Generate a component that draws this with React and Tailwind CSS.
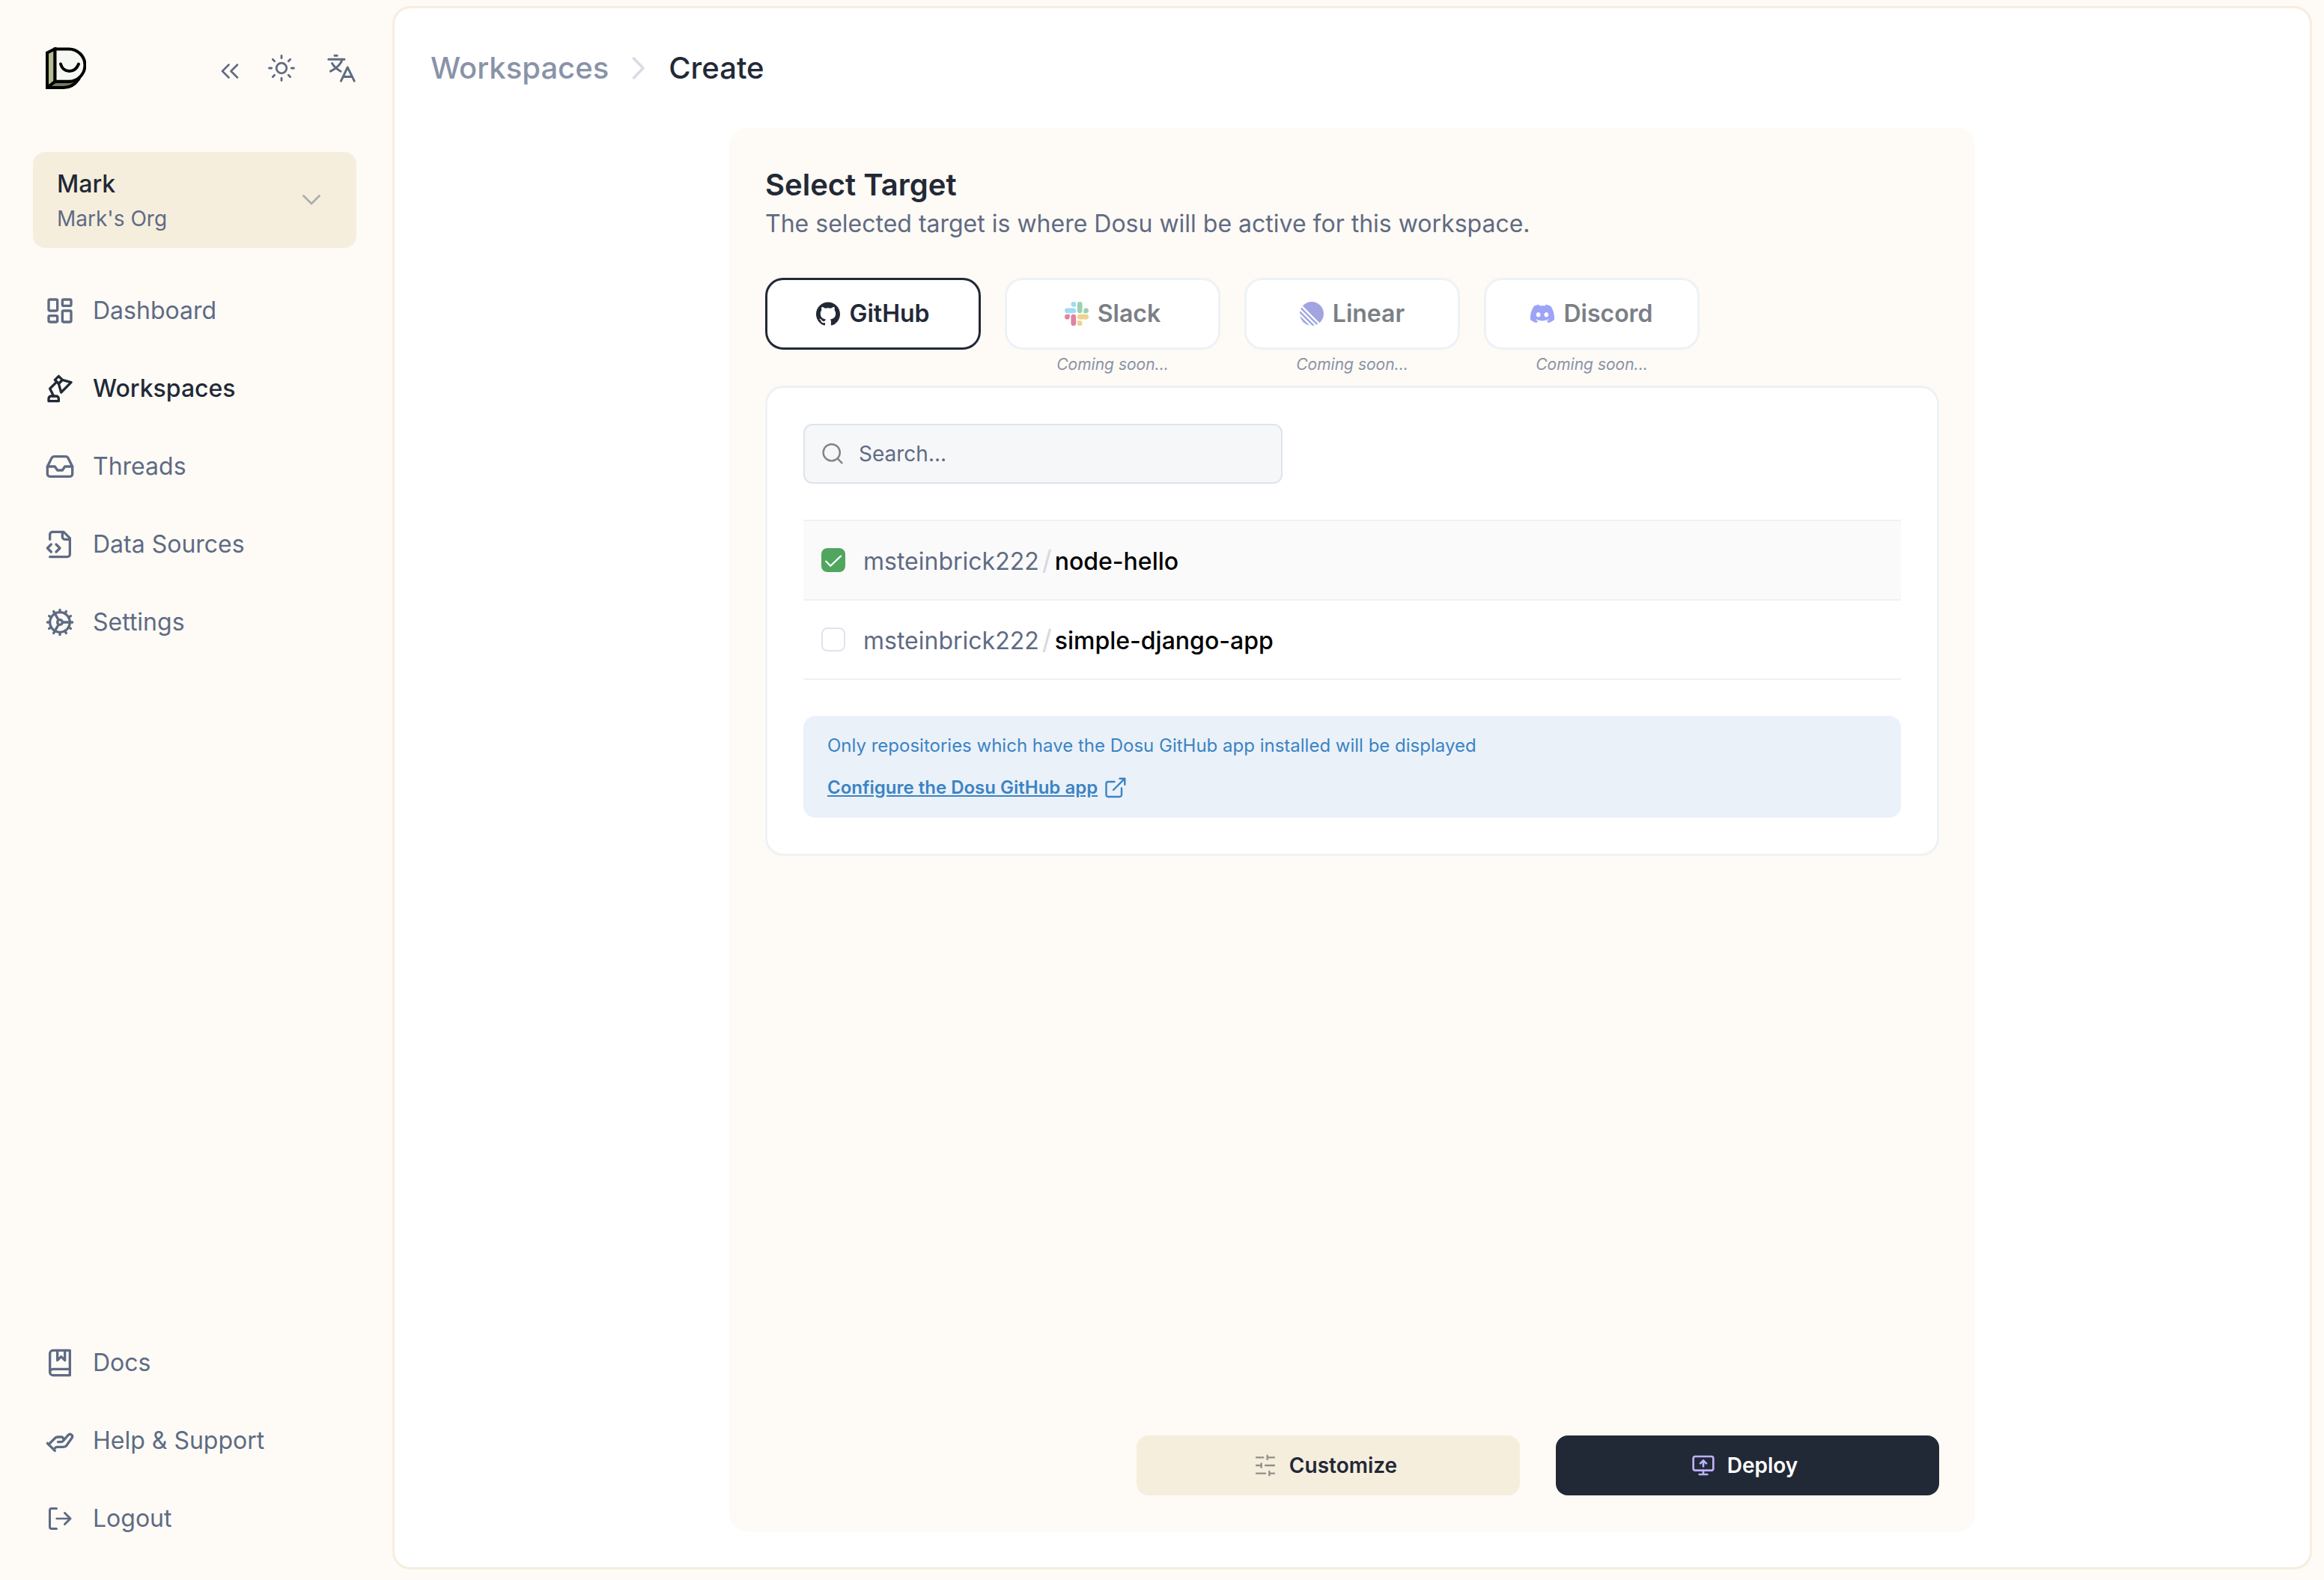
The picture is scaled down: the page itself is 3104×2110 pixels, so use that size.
import { useState } from "react";
import { SiDiscord, SiGithub, SiLinear } from "react-icons/si";

function Icon({ className, size = 24, stroke = 2, children }) {
  return (
    <svg
      viewBox={`0 0 ${size} ${size}`}
      className={className}
      fill="none"
      stroke="currentColor"
      strokeWidth={stroke}
      strokeLinecap="round"
      strokeLinejoin="round"
      aria-hidden="true"
    >
      {children}
    </svg>
  );
}

function Logo() {
  return (
    <svg viewBox="0 0 54 56" className="h-14 w-[54px]" fill="none" stroke="#000" strokeWidth="4" role="img" aria-label="Dosu">
      <path d="M2 7.5 12.5 2.2V46L2 54Z" fill="#b5bb91" />
      <path d="M2 54 12.5 46H31l12-2C38 51 32 54 24 54Z" fill="#717b5d" />
      <path d="M12.5 2.4H31a21.4 21.6 0 0 1 0 43.3H12.5Z" fill="#f5f7f3" />
      <path d="M20 22.500C22 29 26 32 31.700 32S41.500 29 44 22.500" strokeLinecap="round" />
    </svg>
  );
}

const DashboardIcon = (p) => (
  <Icon {...p}>
    <rect x="3" y="3" width="7" height="9" rx="1" />
    <rect x="14" y="3" width="7" height="5" rx="1" />
    <rect x="14" y="12" width="7" height="9" rx="1" />
    <rect x="3" y="16" width="7" height="5" rx="1" />
  </Icon>
);

const LampIcon = (p) => (
  <Icon {...p}>
    <path d="m14 5-3 3 2 7 8-8-7-2Z" />
    <path d="m14 5-3 3-3-3 3-3 3 3Z" />
    <path d="M9.500 6.500 4 12l3 6" />
    <path d="M3 22v-2c0-1.100.900-2 2-2h4a2 2 0 0 1 2 2v2H3Z" />
  </Icon>
);

const InboxIcon = (p) => (
  <Icon {...p}>
    <path d="M22 12h-6l-2 3h-4l-2-3H2" />
    <path d="M5.450 5.110 2 12v6a2 2 0 0 0 2 2h16a2 2 0 0 0 2-2v-6l-3.450-6.890A2 2 0 0 0 16.760 4H7.240a2 2 0 0 0-1.790 1.110z" />
  </Icon>
);

const FileCodeIcon = (p) => (
  <Icon {...p}>
    <path d="M4 22h14a2 2 0 0 0 2-2V7l-5-5H6a2 2 0 0 0-2 2v4" />
    <path d="M14 2v4a2 2 0 0 0 2 2h4" />
    <path d="m5 12-3 3 3 3" />
    <path d="m9 18 3-3-3-3" />
  </Icon>
);

const CogIcon = (p) => (
  <Icon {...p}>
    <path d="M12 20a8 8 0 1 0 0-16 8 8 0 0 0 0 16Z" />
    <path d="M12 14a2 2 0 1 0 0-4 2 2 0 0 0 0 4Z" />
    <path d="M12 2v2M12 22v-2M17 20.660l-1-1.730M11 10.270 7 3.340M20.660 17l-1.730-1M3.340 7l1.730 1M14 12h8M2 12h2M20.660 7l-1.730 1M3.340 17l1.730-1M17 3.340l-1 1.730M11 13.730l-4 6.930" />
  </Icon>
);

const BookIcon = (p) => (
  <Icon {...p}>
    <path d="M4 19.500v-15A2.500 2.500 0 0 1 6.500 2H20v20H6.500a2.500 2.500 0 0 1 0-5H20" />
    <path d="M10 2v8l3-3 3 3V2" />
  </Icon>
);

const HandIcon = (p) => (
  <Icon {...p}>
    <path d="m3 15 5.120-5.120A3 3 0 0 1 10.240 9H13a2 2 0 1 1 0 4h-2.500m4-.680 4.170-4.890a1.880 1.880 0 0 1 2.920 2.360l-4.200 5.940A3 3 0 0 1 14.960 17H9.830a2 2 0 0 0-1.420.590L7 19" />
    <path d="m2 14 6 6" />
  </Icon>
);

const LogoutIcon = (p) => (
  <Icon {...p} size={40} stroke={3}>
    <path d="M15.500 6.500H9A2.500 2.500 0 0 0 6.500 9v22A2.500 2.500 0 0 0 9 33.500h6.500" />
    <path d="M15.500 20H33" strokeWidth="2.400" />
    <path d="m26.500 12.500 7.500 7.500-7.500 7.500" />
  </Icon>
);

const SlackIcon = ({ className }) => (
  <svg viewBox="0 0 24 24" className={className} aria-hidden="true">
    <path fill="#e1839f" d="M5.042 15.165a2.528 2.528 0 0 1-2.520 2.523A2.528 2.528 0 0 1 0 15.165a2.527 2.527 0 0 1 2.522-2.520h2.520v2.520zM6.313 15.165a2.527 2.527 0 0 1 2.521-2.520 2.527 2.527 0 0 1 2.521 2.520v6.313A2.528 2.528 0 0 1 8.834 24a2.528 2.528 0 0 1-2.521-2.522v-6.313z" />
    <path fill="#a0daf4" d="M8.834 5.042a2.528 2.528 0 0 1-2.521-2.520A2.528 2.528 0 0 1 8.834 0a2.528 2.528 0 0 1 2.521 2.522v2.520H8.834zM8.834 6.313a2.528 2.528 0 0 1 2.521 2.521 2.528 2.528 0 0 1-2.521 2.521H2.522A2.528 2.528 0 0 1 0 8.834a2.528 2.528 0 0 1 2.522-2.521h6.312z" />
    <path fill="#99d2b1" d="M18.956 8.834a2.528 2.528 0 0 1 2.522-2.521A2.528 2.528 0 0 1 24 8.834a2.528 2.528 0 0 1-2.522 2.521h-2.522V8.834zM17.688 8.834a2.528 2.528 0 0 1-2.523 2.521 2.527 2.527 0 0 1-2.520-2.521V2.522A2.527 2.527 0 0 1 15.165 0a2.528 2.528 0 0 1 2.523 2.522v6.312z" />
    <path fill="#edd291" d="M15.165 18.956a2.528 2.528 0 0 1 2.523 2.522A2.528 2.528 0 0 1 15.165 24a2.527 2.527 0 0 1-2.520-2.522v-2.522h2.520zM15.165 17.688a2.527 2.527 0 0 1-2.520-2.523 2.526 2.526 0 0 1 2.520-2.520h6.313A2.527 2.527 0 0 1 24 15.165a2.528 2.528 0 0 1-2.522 2.523h-6.313z" />
  </svg>
);

const mainNav = [
  { label: "Dashboard", icon: DashboardIcon },
  { label: "Workspaces", icon: LampIcon, active: true },
  { label: "Threads", icon: InboxIcon },
  { label: "Data Sources", icon: FileCodeIcon },
  { label: "Settings", icon: CogIcon },
];

const footerNav = [
  { label: "Docs", icon: BookIcon },
  { label: "Help & Support", icon: HandIcon },
  { label: "Logout", icon: LogoutIcon },
];

function NavList({ items, label }) {
  return (
    <nav aria-label={label} className="flex flex-col gap-8 px-4">
      {items.map(({ label: text, icon: Glyph, active }) => (
        <a
          key={text}
          href="#"
          aria-current={active ? "page" : undefined}
          className={
            active
              ? "flex h-[72px] items-center gap-6 text-[32px] font-medium text-[#222936]"
              : "flex h-[72px] items-center gap-6 text-[32px] text-[#5f6b84]"
          }
        >
          <Glyph className="size-10 shrink-0" />
          {text}
        </a>
      ))}
    </nav>
  );
}

function Sidebar() {
  return (
    <aside className="flex w-[524px] shrink-0 flex-col pt-[59px] pr-12 pb-[46px] pl-11">
      <div className="mb-20 flex h-16 items-center justify-between pl-[17px]">
        <a href="#" aria-label="Home">
          <Logo />
        </a>
        <div className="flex items-center gap-[37px] text-[#5f6b84]">
          <button type="button" aria-label="Collapse sidebar" className="pt-2">
            <svg viewBox="0 0 24 20" className="h-5 w-6" fill="none" stroke="currentColor" strokeWidth="2.600" strokeLinecap="round" strokeLinejoin="round">
              <path d="M10.500 1.500 2 10l8.500 8.500M22 1.500 13.500 10l8.500 8.500" />
            </svg>
          </button>
          <div className="flex items-center gap-10">
            <button type="button" aria-label="Toggle theme">
              <Icon className="size-10" size={40} stroke={2.8}>
                <circle cx="20" cy="20" r="6.800" />
                <path d="M20 3.500v3.200M20 33.300v3.200M3.500 20h3.200M33.300 20h3.200M8.300 8.300l2.400 2.400M29.300 29.300l2.400 2.400M8.300 31.700l2.400-2.400M29.300 10.700l2.400-2.400" />
              </Icon>
            </button>
            <button type="button" aria-label="Change language">
              <Icon className="size-10" size={40} stroke={3}>
                <path d="M11 3.200h3.200M2.800 8.200H24M21.500 8.200C19 14.500 13 20.500 5.500 24.200M7.500 13.500c2.500 4.200 6.500 8 11.500 10.700" />
                <path d="m19.500 37.200 8.700-18.400 9 18.400M22.500 31.500h11.500" />
              </Icon>
            </button>
          </div>
        </div>
      </div>

      <button type="button" className="mb-12 flex h-32 items-center justify-between rounded-2xl bg-[#f6eedd] pr-12 pl-8 text-left">
        <span className="flex flex-col">
          <span className="text-[32px] leading-[50px] font-medium text-[#222936]">Mark</span>
          <span className="text-[28px] leading-[42px] text-[#5f6b84]">Mark's Org</span>
        </span>
        <svg viewBox="0 0 24 14" className="h-[14px] w-6 text-[#a9adb2]" fill="none" stroke="currentColor" strokeWidth="2.800" strokeLinecap="round" strokeLinejoin="round" aria-hidden="true">
          <path d="M1.500 1.500 12 12 22.500 1.500" />
        </svg>
      </button>

      <NavList items={mainNav} label="Main" />
      <div className="flex-1" />
      <NavList items={footerNav} label="Support" />
    </aside>
  );
}

const targets = [
  { name: "GitHub", icon: <SiGithub className="size-8" />, ready: true },
  { name: "Slack", icon: <SlackIcon className="size-8" /> },
  { name: "Linear", icon: <SiLinear className="size-8 text-[#a0a5e1]" /> },
  { name: "Discord", icon: <SiDiscord className="size-8 text-[#9da3f7]" /> },
];

function TargetTabs() {
  return (
    <div className="mt-12 flex gap-8">
      {targets.map(({ name, icon, ready }) => (
        <div key={name} className="flex w-72 flex-col items-center">
          <button
            type="button"
            disabled={!ready}
            className={
              ready
                ? "flex h-24 w-full items-center justify-center gap-3 rounded-3xl border-3 border-[#222936] bg-white text-[32px] font-semibold text-[#222936]"
                : "flex h-24 w-full items-center justify-center gap-3 rounded-3xl border-3 border-[#eef2f6] bg-white text-[32px] font-semibold text-[#7b7f86]"
            }
          >
            {icon}
            {name}
          </button>
          <div className="h-12 pt-1 text-[21px] leading-8 text-[#8993a8] italic">{ready ? null : "Coming soon..."}</div>
        </div>
      ))}
    </div>
  );
}

const repos = [
  { owner: "msteinbrick222", name: "node-hello" },
  { owner: "msteinbrick222", name: "simple-django-app" },
];

function RepoList() {
  const [selected, setSelected] = useState("node-hello");
  return (
    <ul className="mt-12 border-t-2 border-[#eef2f5]">
      {repos.map(({ owner, name }) => {
        const checked = selected === name;
        return (
          <li key={name} className={checked ? "border-b-2 border-[#eef2f5] bg-[#fafafa]" : "border-b-2 border-[#eef2f5]"}>
            <label className="flex h-26 items-center gap-6 px-6 text-[32px]">
              <span className="relative flex size-8 shrink-0">
                <input
                  type="checkbox"
                  checked={checked}
                  onChange={() => setSelected(checked ? null : name)}
                  className="size-8 appearance-none rounded-lg border-2 border-[#e0e3ec] bg-white checked:border-[#50a65f] checked:bg-[#50a65f]"
                />
                {checked && (
                  <Icon className="pointer-events-none absolute inset-0 size-8 text-white" size={32} stroke={2.2}>
                    <path d="m6.200 17.600 6 6.200L26 10.600" />
                  </Icon>
                )}
              </span>
              <span className="flex items-baseline gap-1">
                <span className="text-[#5f6b84]">{owner}</span>
                <span className="text-[36px] text-[#d5d9e1]">/</span>
                <span className="font-medium text-black">{name}</span>
              </span>
            </label>
          </li>
        );
      })}
    </ul>
  );
}

function TargetCard() {
  return (
    <section className="rounded-3xl border-3 border-[#eef2f5] bg-white p-12">
      <div className="flex h-20 max-w-[640px] items-center gap-5 rounded-xl border-2 border-[#dee3ec] bg-[#f6f7f9] px-[22px]">
        <Icon className="size-[30px] shrink-0 text-[#838484]" size={30} stroke={2.4}>
          <circle cx="13.700" cy="13.300" r="11.100" />
          <path d="m21.700 21.300 5.800 6" />
        </Icon>
        <input
          type="text"
          aria-label="Search repositories"
          placeholder="Search..."
          className="w-full bg-transparent text-[28px] text-[#222936] outline-none placeholder:text-[#5f6b84]"
        />
      </div>

      <RepoList />

      <div className="mt-12 flex flex-col gap-2 rounded-2xl bg-[#ebf1f9] px-8 py-4 text-[24px] leading-[48px] text-[#3a84c4]">
        <p>Only repositories which have the Dosu GitHub app installed will be displayed</p>
        <a href="#" className="flex items-center gap-[10px] font-semibold">
          <span className="underline">Configure the Dosu GitHub app</span>
          <Icon className="size-7" size={28} stroke={2.4}>
            <path d="M12.500 6H4a2.500 2.500 0 0 0-2.500 2.500v15A2.500 2.500 0 0 0 4 26h15.500a2.500 2.500 0 0 0 2.500-2.500V14.500" />
            <path d="M11 17 26.300 1.700M19.500 1.700h6.800v8" />
          </Icon>
        </a>
      </div>
    </section>
  );
}

export default function App() {
  return (
    <div className="flex min-h-screen bg-[#fefbf6] font-['Inter',sans-serif] text-[#222936]">
      <Sidebar />
      <main className="mt-2 mr-4 mb-[14px] flex min-w-0 flex-1 flex-col rounded-3xl border-3 border-[#f6eedd] bg-white p-12">
        <nav aria-label="Breadcrumb" className="mb-12 flex h-16 items-center gap-[31px] text-[40px] font-medium">
          <a href="#" className="text-[#8993a8]">
            Workspaces
          </a>
          <svg viewBox="0 0 18 32" className="h-8 w-[18px] text-[#d9dbe5]" fill="none" stroke="currentColor" strokeWidth="3.600" strokeLinecap="round" strokeLinejoin="round" aria-hidden="true">
            <path d="m2.500 3 12.500 13-12.500 13" />
          </svg>
          <span aria-current="page">Create</span>
        </nav>

        <div className="mx-auto flex w-full max-w-[1664px] flex-1 flex-col rounded-3xl bg-[#fefaf5] p-12">
          <h1 className="text-[40px] leading-[56px] font-semibold">Select Target</h1>
          <p className="text-[32px] leading-[48px] text-[#5f6b84]">The selected target is where Dosu will be active for this workspace.</p>
          <TargetTabs />
          <TargetCard />
          <div className="mt-auto flex justify-end gap-12 pt-12 text-[28px] font-semibold">
            <button type="button" className="flex h-20 w-[512px] items-center justify-center gap-4 rounded-2xl bg-[#f6eedd] pr-2">
              <Icon className="size-8 text-[#8f9089]" stroke={1.75}>
                <path d="M21 4h-7M10 4H3M21 12h-9M8 12H3M21 20h-5M12 20H3M14 2v4M8 10v4M16 18v4" />
              </Icon>
              Customize
            </button>
            <button type="button" className="flex h-20 w-[512px] items-center justify-center gap-4 rounded-2xl bg-[#222936] pr-2 text-white">
              <Icon className="size-8 text-[#bcb0fc]">
                <path d="m9 10 3-3 3 3M12 13V7" />
                <rect x="2" y="3" width="20" height="14" rx="2" />
                <path d="M12 17v4M8 21h8" />
              </Icon>
              Deploy
            </button>
          </div>
        </div>
      </main>
    </div>
  );
}
